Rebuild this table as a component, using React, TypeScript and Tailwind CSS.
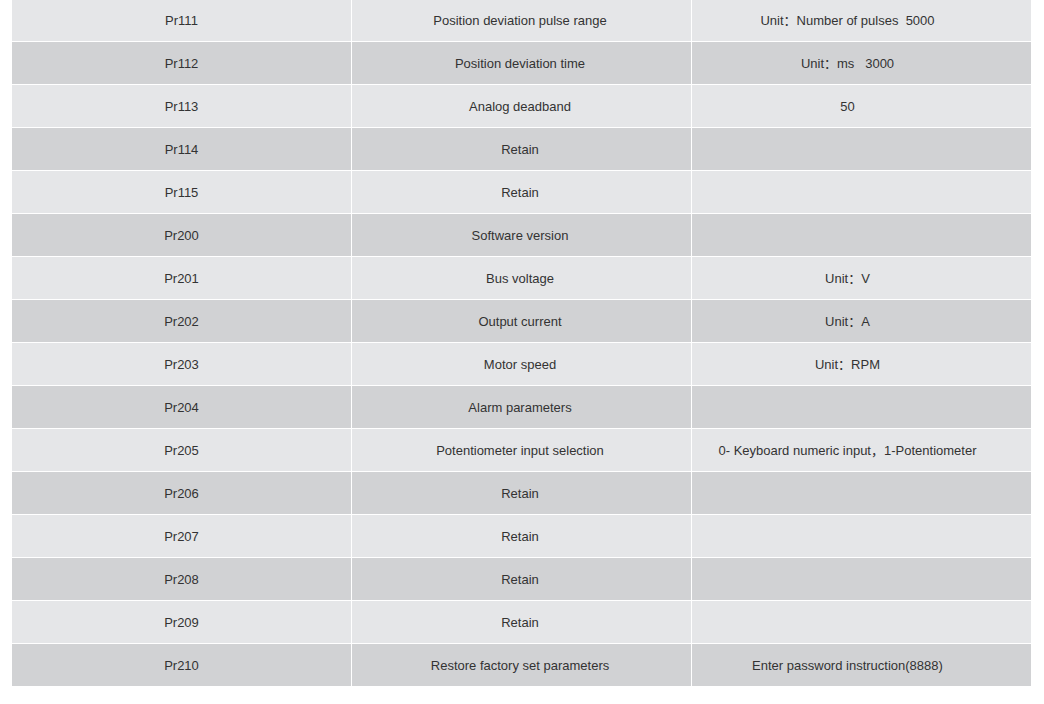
import React from 'react';

const rows: [string, string, string][] = [
  ['Pr111', 'Position deviation pulse range', 'Unit：Number of pulses  5000'],
  ['Pr112', 'Position deviation time', 'Unit：ms   3000'],
  ['Pr113', 'Analog deadband', '50'],
  ['Pr114', 'Retain', ''],
  ['Pr115', 'Retain', ''],
  ['Pr200', 'Software version', ''],
  ['Pr201', 'Bus voltage', 'Unit：V'],
  ['Pr202', 'Output current', 'Unit：A'],
  ['Pr203', 'Motor speed', 'Unit：RPM'],
  ['Pr204', 'Alarm parameters', ''],
  ['Pr205', 'Potentiometer input selection', '0- Keyboard numeric input，1-Potentiometer'],
  ['Pr206', 'Retain', ''],
  ['Pr207', 'Retain', ''],
  ['Pr208', 'Retain', ''],
  ['Pr209', 'Retain', ''],
  ['Pr210', 'Restore factory set parameters', 'Enter password instruction(8888)'],
];

const App: React.FC = () => {
  return (
    <div className="w-[1044px] h-[704px] bg-white overflow-hidden">
      <div
        className="ml-3 -mt-px w-[1019px] grid grid-cols-[339px_339px_339px] auto-rows-[42px] gap-px bg-white text-[13px] text-[#333]"
        style={{ fontFamily: '"Liberation Sans", Arial, "Noto Sans CJK SC", sans-serif' }}
      >
        {rows.map((r, i) =>
          r.map((c, j) => (
            <div
              key={`${i}-${j}`}
              className={`flex items-center justify-center pt-[2px] whitespace-pre ${
                i % 2 === 0 ? 'bg-[#e5e6e8]' : 'bg-[#d1d2d4]'
              } ${j === 2 ? 'pr-[28px]' : ''} ${j === 1 ? 'pr-[3px]' : ''}`}
            >
              {c}
            </div>
          ))
        )}
      </div>
    </div>
  );
};

export default App;
